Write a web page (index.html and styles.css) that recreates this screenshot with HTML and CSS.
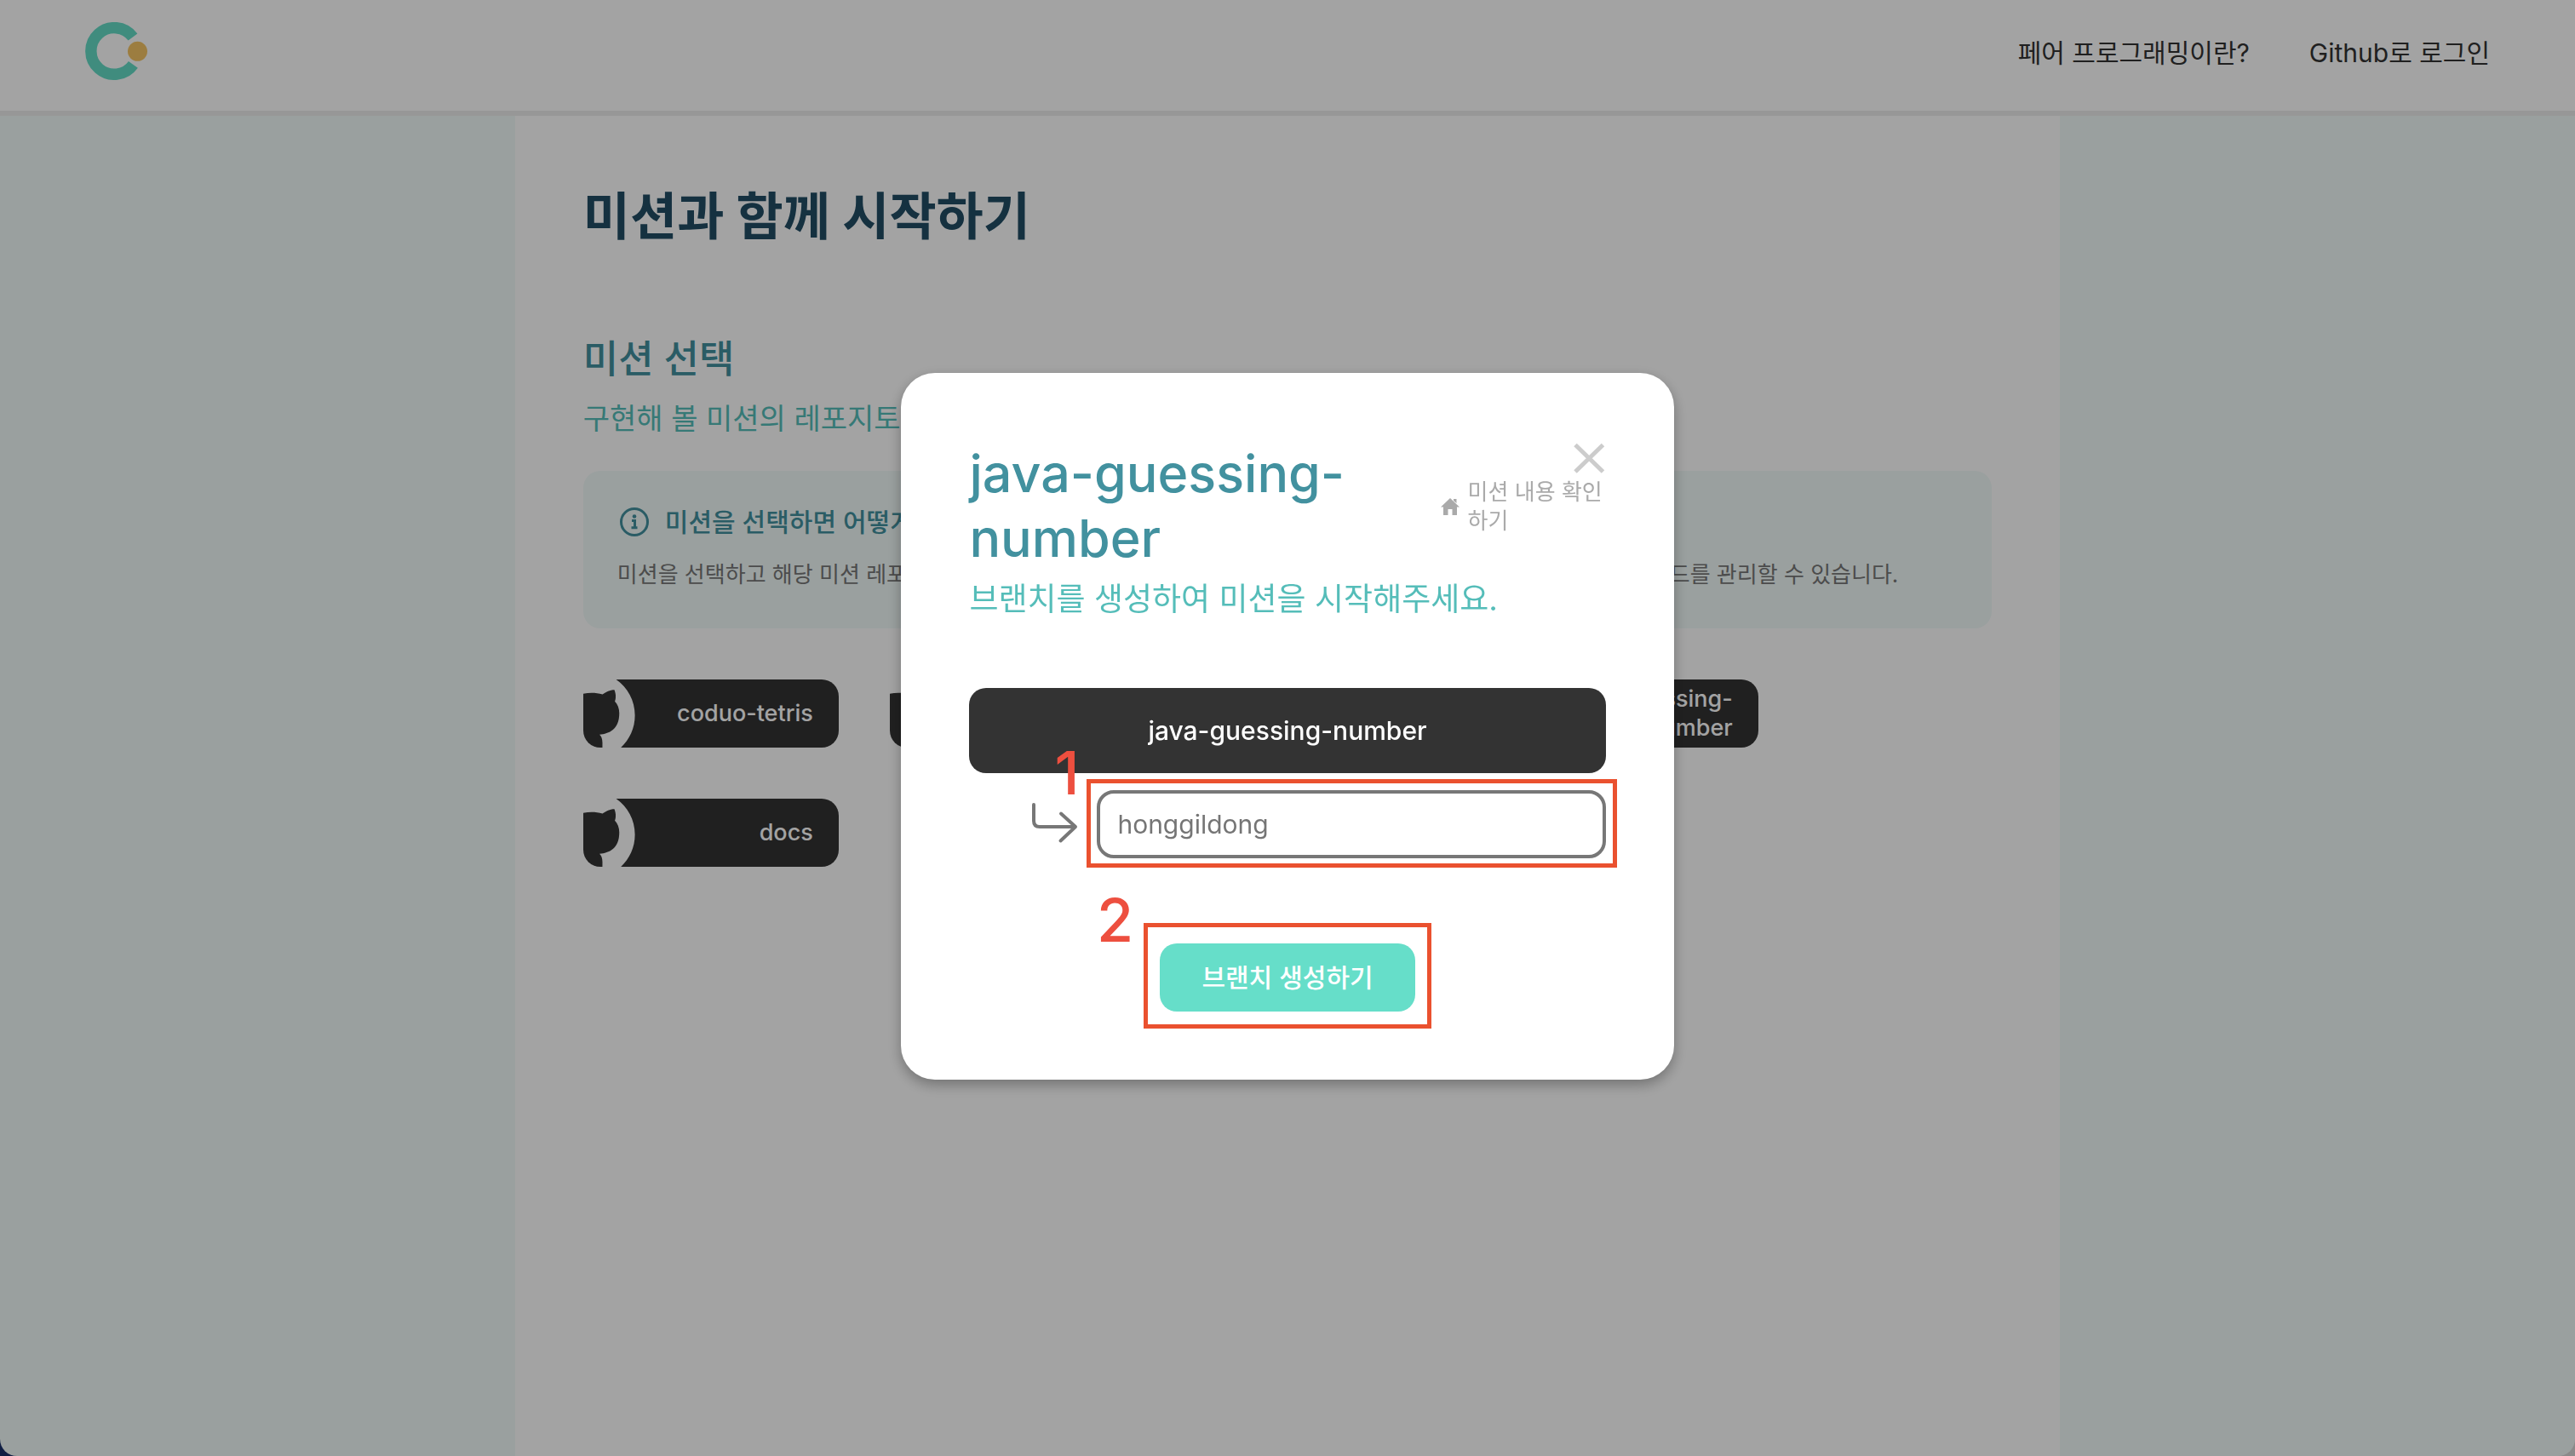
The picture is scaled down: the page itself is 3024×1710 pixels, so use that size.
FILE: index.html
```html
<!DOCTYPE html>
<html lang="ko">
<head>
<meta charset="utf-8">
<meta name="viewport" content="width=device-width, initial-scale=1">
<title>미션과 함께 시작하기</title>
<link rel="stylesheet" href="styles.css">
</head>
<body>
<svg class="symbols" aria-hidden="true">
  <symbol id="github" viewBox="0 0 98 96">
    <path fill="currentColor" fill-rule="evenodd" d="M48.854 0C21.839 0 0 22 0 49.217c0 21.756 13.993 40.172 33.405 46.69 2.427.49 3.316-1.059 3.316-2.362 0-1.141-.08-5.052-.08-9.127-13.59 2.934-16.42-5.867-16.42-5.867-2.184-5.704-5.42-7.17-5.42-7.17-4.448-3.015.324-3.015.324-3.015 4.934.326 7.523 5.052 7.523 5.052 4.367 7.496 11.404 5.378 14.235 4.074.404-3.178 1.699-5.378 3.074-6.6-10.839-1.141-22.243-5.378-22.243-24.283 0-5.378 1.94-9.778 5.014-13.2-.485-1.222-2.184-6.275.486-13.038 0 0 4.125-1.304 13.426 5.052a46.97 46.97 0 0 1 12.214-1.63c4.125 0 8.33.571 12.213 1.63 9.302-6.356 13.427-5.052 13.427-5.052 2.67 6.763.97 11.816.485 13.038 3.155 3.422 5.015 7.822 5.015 13.2 0 18.905-11.404 23.06-22.324 24.283 1.78 1.548 3.316 4.481 3.316 9.126 0 6.6-.08 11.897-.08 13.526 0 1.304.89 2.853 3.316 2.364 19.412-6.52 33.405-24.935 33.405-46.691C97.707 22 75.788 0 48.854 0z"/>
  </symbol>
</svg>
<div class="page">
  <header class="header">
    <a class="logo" href="#" aria-label="Coduo">
      <svg width="74" height="68" viewBox="0 0 74 68" aria-hidden="true">
        <path d="M56 17.6A27.3 27.3 0 1 0 56.4 49.8" fill="none" stroke="#64dbc6" stroke-width="13.4"/>
        <circle cx="61.5" cy="34.3" r="11.5" fill="#f4c464"/>
      </svg>
    </a>
    <nav class="nav">
      <a href="#">페어 프로그래밍이란?</a>
      <a href="#">Github로 로그인</a>
    </nav>
  </header>
  <main class="main">
    <h1 class="title">미션과 함께 시작하기</h1>
    <h2 class="section-title">미션 선택</h2>
    <p class="section-text">구현해 볼 미션의 레포지토리를 선택해 주세요.</p>
    <section class="info">
      <h3 class="info-title">
        <svg width="36" height="36" viewBox="0 0 36 36" fill="none" stroke="currentColor" stroke-width="3" aria-hidden="true">
          <circle cx="18" cy="18" r="15.5"/>
          <circle cx="18" cy="11.5" r="2.3" fill="currentColor" stroke="none"/>
          <path d="M15 16.5h3.5v8M14.5 24.7h7"/>
        </svg>
        미션을 선택하면 어떻게 되나요?
      </h3>
      <p class="info-text">미션을 선택하고 해당 미션 레포지토리에 브랜치를 생성하면 미션으로 페어 프로그래밍을 진행하면서 깃허브에서 코드를 관리할 수 있습니다.</p>
    </section>
    <div class="missions">
      <button class="mission" type="button"><svg class="mission-mark" width="102" height="100" aria-hidden="true"><use href="#github"/></svg><span>coduo-tetris</span></button>
      <button class="mission" type="button"><svg class="mission-mark" width="102" height="100" aria-hidden="true"><use href="#github"/></svg><span>java-lotto</span></button>
      <button class="mission" type="button"><svg class="mission-mark" width="102" height="100" aria-hidden="true"><use href="#github"/></svg><span>java-baseball</span></button>
      <button class="mission" type="button"><svg class="mission-mark" width="102" height="100" aria-hidden="true"><use href="#github"/></svg><span>java-guessing-number</span></button>
      <button class="mission" type="button"><svg class="mission-mark" width="102" height="100" aria-hidden="true"><use href="#github"/></svg><span>docs</span></button>
    </div>
  </main>
  <div class="backdrop">
    <div class="modal" role="dialog" aria-modal="true" aria-labelledby="modal-title">
      <div class="modal-head">
        <h2 class="modal-title" id="modal-title">java-guessing-number</h2>
        <div class="modal-side">
          <button class="close" type="button" aria-label="닫기">
            <svg width="40" height="40" viewBox="0 0 40 40" fill="none" stroke="currentColor" stroke-width="5" aria-hidden="true"><path d="M4 4.500L36.500 36M36.500 4.500L4 36"/></svg>
          </button>
          <a class="mission-link" href="#">
            <svg width="22" height="20" viewBox="0 0 22 20" fill="currentColor" aria-hidden="true"><path d="M11 0L22 10.500H19V20H13.500V13H8.500V20H3V10.500H0ZM15 1h3.500v5L15 3z"/></svg>
            <span>미션 내용 확인하기</span>
          </a>
        </div>
      </div>
      <p class="modal-text">브랜치를 생성하여 미션을 시작해주세요.</p>
      <div class="repo">java-guessing-number</div>
      <div class="branch">
        <svg width="54" height="50" viewBox="0 0 54 50" fill="none" stroke="#777" stroke-width="4" stroke-linecap="round" stroke-linejoin="round" aria-hidden="true"><path d="M2 2V21Q2 28 9 28H50M34 12.500L51 28L33.500 44.500"/></svg>
        <div class="marked marked-field">
          <input class="branch-input" type="text" placeholder="honggildong" aria-label="브랜치 이름">
          <span class="step">1</span>
        </div>
      </div>
      <div class="marked marked-action">
        <button class="create" type="button">브랜치 생성하기</button>
        <span class="step">2</span>
      </div>
    </div>
  </div>
</div>
</body>
</html>
```
FILE: styles.css
```css
* {
  box-sizing: border-box;
  margin: 0;
}

html {
  background: linear-gradient(to right, #1a2f6b 50%, #d8d8d8 50%);
}

body {
  font-family: Inter, "Noto Sans CJK KR", sans-serif;
  color: #333;
}

button,
input {
  font: inherit;
  border: 0;
}

button {
  cursor: pointer;
}

a {
  color: inherit;
  text-decoration: none;
}

svg {
  display: block;
  flex: none;
}

.symbols {
  position: absolute;
  width: 0;
  height: 0;
}

.page {
  position: relative;
  display: flex;
  flex-direction: column;
  min-height: 100vh;
  overflow: hidden;
  border-radius: 0 0 20px 20px;
  background: #f1faf9;
}

.header {
  display: flex;
  align-items: center;
  justify-content: space-between;
  padding: 26px 100px 36px;
  border-bottom: 6px solid #ededed;
  background: #fff;
}

.nav {
  display: flex;
  gap: 70px;
  padding-top: 4px;
  font-size: 30px;
  line-height: 40px;
}

.main {
  flex: 1;
  width: 60%;
  margin: 0 auto;
  padding: 80px;
  background: #fff;
}

.title {
  margin-bottom: 102px;
  font-size: 60px;
  font-weight: 700;
  line-height: 76px;
  color: #224d65;
}

.section-title {
  margin-bottom: 20px;
  font-size: 45px;
  font-weight: 500;
  line-height: 56px;
  color: #42919f;
}

.section-text {
  margin-bottom: 39px;
  font-size: 34px;
  line-height: 44px;
  color: #55bdb9;
}

.info {
  margin-bottom: 60px;
  padding: 40px 40px 45px;
  border-radius: 20px;
  background: #f1faf9;
}

.info-title {
  display: flex;
  align-items: center;
  gap: 18px;
  margin-bottom: 24px;
  padding-left: 2px;
  font-size: 30px;
  font-weight: 500;
  line-height: 40px;
  color: #42919f;
}

.info-text {
  font-size: 26px;
  line-height: 36px;
  color: #777;
}

.missions {
  display: grid;
  grid-template-columns: repeat(4, 300px);
  gap: 60px;
}

.mission {
  position: relative;
  display: flex;
  align-items: center;
  justify-content: flex-end;
  height: 80px;
  padding: 0 30px 0 70px;
  overflow: hidden;
  border-radius: 0 20px 20px 20px;
  background: #333;
  color: #fff;
  font-size: 27px;
  font-weight: 500;
  line-height: 34px;
  text-align: right;
}

.mission-mark {
  position: absolute;
  top: -9px;
  left: -41px;
}

.backdrop {
  position: fixed;
  inset: 0;
  display: flex;
  align-items: center;
  justify-content: center;
  padding-bottom: 4px;
  background: rgba(0, 0, 0, 0.36);
}

.modal {
  width: 30%;
  padding: 80px;
  border-radius: 40px;
  background: #fff;
  box-shadow: 0 6px 16px rgba(0, 0, 0, 0.3);
}

.modal-head {
  display: flex;
  justify-content: space-between;
  margin-bottom: 8px;
}

.modal-title {
  flex: 1;
  font-size: 61px;
  font-weight: 500;
  line-height: 76px;
  color: #42919f;
}

.modal-side {
  display: flex;
  flex-direction: column;
  align-items: flex-end;
}

.close {
  padding: 0;
  background: none;
  color: #ccc;
}

.mission-link {
  display: flex;
  align-items: center;
  gap: 10px;
  padding-top: 3px;
  font-size: 26px;
  line-height: 34px;
  color: #aaa;
}

.mission-link span {
  width: 162px;
}

.modal-text {
  margin-bottom: 78px;
  font-size: 37px;
  line-height: 52px;
  color: #55bdb9;
}

.repo {
  margin-bottom: 20px;
  border-radius: 20px;
  background: #333;
  color: #fff;
  font-size: 30px;
  font-weight: 500;
  line-height: 100px;
  text-align: center;
}

.branch {
  display: flex;
  align-items: center;
  gap: 22px;
  margin-bottom: 100px;
  padding-left: 74px;
}

.marked {
  position: relative;
}

.marked::after {
  content: "";
  position: absolute;
  border: 5px solid #ea512f;
  pointer-events: none;
}

.marked-field {
  flex: 1;
}

.marked-field::after {
  inset: -13px -13px -11px -12px;
}

.marked-action {
  width: 300px;
  margin: 0 auto;
}

.marked-action::after {
  inset: -24px -19px -20px -19px;
}

.step {
  position: absolute;
  font-size: 70px;
  font-weight: 500;
  line-height: 70px;
  color: #ed4f3f;
}

.marked-field .step {
  top: -55px;
  left: -50px;
}

.marked-action .step {
  top: -62px;
  left: -74px;
}

.branch-input {
  display: block;
  width: 100%;
  height: 80px;
  padding: 0 20px;
  border: 4px solid #777;
  border-radius: 20px;
  background: #fff;
  font-size: 30px;
  color: #333;
}

.branch-input::placeholder {
  color: #757575;
  opacity: 1;
}

.create {
  display: block;
  width: 100%;
  height: 80px;
  padding-bottom: 5px;
  border-radius: 20px;
  background: #66dec9;
  color: #fff;
  font-size: 30px;
  font-weight: 500;
}
```
